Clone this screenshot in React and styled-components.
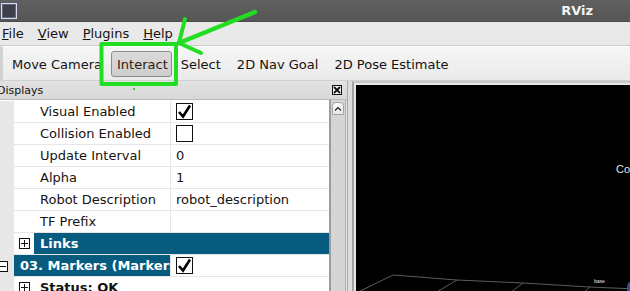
import styled, { createGlobalStyle } from 'styled-components';

const GlobalStyle = createGlobalStyle`
  html, body {
    margin: 0;
    padding: 0;
    overflow: hidden;
    background: #e4e4e4;
  }
  * {
    box-sizing: border-box;
  }
`;

const Window = styled.div`
  position: relative;
  width: 630px;
  height: 291px;
  overflow: hidden;
  display: flex;
  flex-direction: column;
  font-family: 'DejaVu Sans', sans-serif;
  font-size: 13px;
  color: #161210;
  background: #e4e4e4;
`;

const TitleBar = styled.div`
  height: 22px;
  flex: none;
  display: flex;
  align-items: center;
  padding: 0 37px 0 1px;
  background: linear-gradient(#606060, #565656);
  border-bottom: 1px solid #4a4a4a;
`;

const WinIcon = styled.div`
  width: 16px;
  height: 16px;
  border: 1px solid #d6dcf5;
  background: #3e3f4a;
  box-shadow: inset 0 0 0 1px #62667e;
`;

const Title = styled.span`
  margin-left: auto;
  color: #f4f4f4;
  font-weight: bold;
`;

const MenuBar = styled.div`
  height: 24px;
  flex: none;
  display: flex;
  align-items: center;
  padding-left: 2px;
  gap: 14px;
  background: #e9e9e9;
  border-bottom: 1px solid #cbcbcb;
`;

const MenuItem = styled.span`
  &::first-letter {
    text-decoration: underline;
  }
`;

const ToolBar = styled.div`
  height: 34px;
  flex: none;
  display: flex;
  align-items: center;
  padding: 1px 0 0 2px;
  gap: 2px;
  background: linear-gradient(#f6f6f6, #eaeaea);
  border-top: 1px solid #ffffff;
  border-left: 3px solid #d2d2d2;
`;

const ToolButton = styled.div`
  height: 26px;
  display: flex;
  align-items: center;
  padding: 0 ${(p) => (p.$active ? '3px 0 5px' : '6px')};
  border-radius: 3px;
  border: 1px solid ${(p) => (p.$active ? '#8c8c8c' : 'transparent')};
  background: ${(p) => (p.$active ? 'linear-gradient(#dadada, #cdcdcd)' : 'transparent')};
  color: ${(p) => (p.$active ? '#2e1a10' : 'inherit')};
`;

const Main = styled.div`
  flex: 1;
  display: flex;
  min-height: 0;
  border-top: 1px solid #d0d0d0;
`;

const DisplaysPanel = styled.div`
  width: 348px;
  flex: none;
  display: flex;
  flex-direction: column;
  border-right: 1px solid #a9a9a9;
`;

const DockHeader = styled.div`
  height: 19px;
  flex: none;
  display: flex;
  align-items: center;
  justify-content: space-between;
  padding: 0 5px 0 0;
  margin-left: -3px;
  font-size: 11px;
  background: linear-gradient(#e2e2e2, #d8d8d8);
  border-bottom: 1px solid #b9b9b9;
`;

const CloseBox = styled.div`
  width: 10px;
  height: 10px;
  border: 1px solid #111;
  display: flex;
  align-items: center;
  justify-content: center;
  background: #f0f0f0;
`;

const TreeArea = styled.div`
  flex: 1;
  display: flex;
  min-height: 0;
`;

const Tree = styled.div`
  width: 331px;
  flex: none;
  padding-top: 1px;
  background: #ffffff;
  border-right: 2px solid #9d9d9d;
  overflow: hidden;
`;

const Row = styled.div`
  display: grid;
  grid-template-columns: 14px 156px 1fr;
  height: 22px;
  flex: none;
`;

const Gutter = styled.div`
  background: #e7e7e7;
  display: flex;
  align-items: center;
  overflow: visible;
`;

const LabelCell = styled.div`
  grid-column: ${(p) => (p.$wide ? '2 / span 2' : 'auto')};
  display: flex;
  align-items: center;
  padding-left: ${(p) => p.$pad ?? 26}px;
  white-space: nowrap;
  overflow: hidden;
  border-bottom: 1px solid #e6e6e6;
  font-weight: ${(p) => (p.$bold ? 'bold' : 'normal')};
  background: ${(p) => (p.$selected ? '#075b7e' : 'transparent')};
  color: ${(p) => (p.$selected ? '#ffffff' : 'inherit')};
`;

const Expander = styled.div`
  width: 20px;
  height: 100%;
  flex: none;
  display: flex;
  align-items: center;
  padding-left: 5px;
  background: #ffffff;
`;

const SelectedText = styled.div`
  flex: 1;
  height: 100%;
  display: flex;
  align-items: center;
  padding-left: 6px;
  font-weight: bold;
  background: ${(p) => (p.$selected ? '#075b7e' : 'transparent')};
  color: ${(p) => (p.$selected ? '#ffffff' : 'inherit')};
`;

const ValueCell = styled.div`
  display: flex;
  align-items: center;
  padding-left: 5px;
  border-left: 1px solid #e6e6e6;
  border-bottom: 1px solid #e6e6e6;
  white-space: nowrap;
  overflow: hidden;
`;

const Box = styled.div`
  width: 11px;
  height: 11px;
  flex: none;
  margin-left: ${(p) => p.$shift ?? 0}px;
  border: 1px solid #111;
  background: #ffffff;
  display: flex;
  align-items: center;
  justify-content: center;
`;

const Check = styled.div`
  width: 17px;
  height: 17px;
  border: 1px solid #111;
  background: #ffffff;
  display: flex;
  align-items: center;
  justify-content: center;
`;

const ScrollTrack = styled.div`
  width: 15px;
  flex: none;
  padding: 2px 1px 0;
  background: #d5d5d5;
  border-right: 1px solid #b0b0b0;
`;

const ScrollUp = styled.div`
  height: 13px;
  border: 1px solid #a3a3a3;
  border-radius: 4px 4px 0 0;
  background: linear-gradient(#fbfbfb, #e7e7e7);
  display: flex;
  align-items: center;
  justify-content: center;
`;

const Splitter = styled.div`
  width: 4px;
  flex: none;
  background: #dcdcdc;
`;

const RenderFrame = styled.div`
  flex: 1;
  padding: 2px 0 0 2px;
  border-left: 2px solid #a2a2a2;
  border-top: 2px solid #c7c7c7;
  background: #e8e8e8;
  display: flex;
`;

const RenderView = styled.div`
  position: relative;
  flex: 1;
  background: #000000;
  overflow: hidden;
`;

const CanvasLabel = styled.span`
  position: absolute;
  font-family: 'Liberation Sans', sans-serif;
  font-size: ${(p) => p.$size}px;
  color: #e8e8e8;
  white-space: nowrap;
`;

const Overlay = styled.svg`
  position: absolute;
  inset: 0;
  pointer-events: none;
`;

function PlusMinus({ minus, shift }) {
  return (
    <Box $shift={shift}>
      <svg width='9' height='9' viewBox='0 0 9 9'>
        <path d='M1 4.5H8' stroke='#111' strokeWidth='1' />
        {!minus && <path d='M4.5 1V8' stroke='#111' strokeWidth='1' />}
      </svg>
    </Box>
  );
}

function CheckBox({ checked }) {
  return (
    <Check>
      {checked && (
        <svg width='15' height='15' viewBox='0 0 15 15'>
          <path
            d='M2 8 L6 12.5 L13 1.5'
            fill='none'
            stroke='#000'
            strokeWidth='2.6'
            strokeLinejoin='miter'
          />
        </svg>
      )}
    </Check>
  );
}

const props = [
  { label: 'Visual Enabled', check: true },
  { label: 'Collision Enabled', check: false },
  { label: 'Update Interval', value: '0' },
  { label: 'Alpha', value: '1' },
  { label: 'Robot Description', value: 'robot_description' },
  { label: 'TF Prefix', value: '' },
];

export default function App() {
  return (
    <>
      <GlobalStyle />
      <Window>
        <TitleBar>
          <WinIcon />
          <Title>RViz</Title>
        </TitleBar>
        <MenuBar>
          <MenuItem>File</MenuItem>
          <MenuItem>View</MenuItem>
          <MenuItem>Plugins</MenuItem>
          <MenuItem>Help</MenuItem>
        </MenuBar>
        <ToolBar>
          <ToolButton>Move Camera</ToolButton>
          <ToolButton $active>Interact</ToolButton>
          <ToolButton>Select</ToolButton>
          <ToolButton>2D Nav Goal</ToolButton>
          <ToolButton>2D Pose Estimate</ToolButton>
        </ToolBar>
        <Main>
          <DisplaysPanel>
            <DockHeader>
              <span>Displays</span>
              <CloseBox>
                <svg width='8' height='8' viewBox='0 0 8 8'>
                  <path d='M1 1L7 7M7 1L1 7' stroke='#111' strokeWidth='1.8' />
                </svg>
              </CloseBox>
            </DockHeader>
            <TreeArea>
              <Tree>
                {props.map((p) => (
                  <Row key={p.label}>
                    <Gutter />
                    <LabelCell>{p.label}</LabelCell>
                    <ValueCell>
                      {p.check !== undefined ? <CheckBox checked={p.check} /> : p.value}
                    </ValueCell>
                  </Row>
                ))}
                <Row>
                  <Gutter />
                  <LabelCell $wide $pad={0}>
                    <Expander>
                      <PlusMinus />
                    </Expander>
                    <SelectedText $selected>Links</SelectedText>
                  </LabelCell>
                </Row>
                <Row>
                  <Gutter>
                    <PlusMinus minus shift={-3} />
                  </Gutter>
                  <LabelCell $pad={6} $selected $bold>
                    03. Markers (Markers)
                  </LabelCell>
                  <ValueCell>
                    <CheckBox checked />
                  </ValueCell>
                </Row>
                <Row>
                  <Gutter />
                  <LabelCell $wide $pad={0}>
                    <Expander>
                      <PlusMinus />
                    </Expander>
                    <SelectedText>Status: OK</SelectedText>
                  </LabelCell>
                </Row>
              </Tree>
              <ScrollTrack>
                <ScrollUp>
                  <svg width='8' height='5' viewBox='0 0 8 5'>
                    <path d='M1 4.5L4 1.5L7 4.5' fill='none' stroke='#222' strokeWidth='1.2' />
                  </svg>
                </ScrollUp>
              </ScrollTrack>
            </TreeArea>
          </DisplaysPanel>
          <Splitter />
          <RenderFrame>
            <RenderView>
              <svg width='274' height='207' viewBox='0 0 274 207'>
                <g fill='none' stroke='#5c5c5c' strokeWidth='1'>
                  <path d='M-10 213 L37 190 L101 195 L167 198 L234 202 L280 204' />
                  <path d='M101 195 L79 208' />
                  <path d='M167 198 L154 208' />
                  <path d='M234 202 L227 208' />
                </g>
                <ellipse cx='274' cy='203' rx='3' ry='6' fill='#3a4f9a' />
              </svg>
              <CanvasLabel $size={11} style={{ left: 260, top: 78 }}>
                Co
              </CanvasLabel>
              <CanvasLabel $size={5} style={{ left: 238, top: 193 }}>
                base
              </CanvasLabel>
            </RenderView>
          </RenderFrame>
        </Main>
        <Overlay width='630' height='291' viewBox='0 0 630 291'>
          <g fill='none' stroke='#22dd22' strokeLinecap='round' strokeLinejoin='round'>
            <rect x='101.5' y='44' width='74.5' height='40' strokeWidth='4' strokeLinecap='butt' />
            <path d='M255 12 L179 43' strokeWidth='4.5' />
            <path d='M179 43 L185 19' strokeWidth='4' />
            <path d='M179 43 L201 53' strokeWidth='4' />
          </g>
          <rect x='133' y='88' width='2' height='2' fill='#22dd22' />
        </Overlay>
      </Window>
    </>
  );
}
